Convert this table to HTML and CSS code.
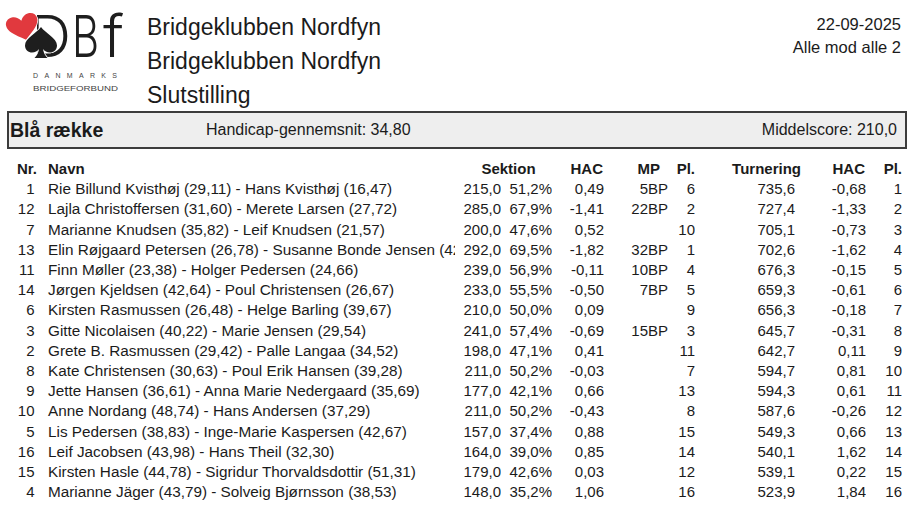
FILE: index.html
```html
<!DOCTYPE html>
<html lang="da">
<head>
<meta charset="utf-8">
<title>Slutstilling - Bridgeklubben Nordfyn</title>
<link rel="stylesheet" href="styles.css">
</head>
<body>
<div class="page">
  <header class="top">
    <svg class="logo" viewBox="0 0 135 100" width="135" height="100" aria-label="Danmarks Bridgeforbund">
      <defs>
        <clipPath id="dclip"><rect x="37" y="0" width="40" height="70"/></clipPath>
      </defs>
      <text class="lg" x="29" y="57" font-size="58" textLength="42" lengthAdjust="spacingAndGlyphs" clip-path="url(#dclip)">D</text>
      <text class="lg" transform="translate(72,57) scale(0.72,1)" font-size="58">B</text>
      <text class="lg" transform="translate(103,57) scale(1.05,1)" font-size="58">f</text>
      <g transform="translate(7,15) rotate(-14 16 12.5)">
        <path class="heart" d="M16,25 C5.5,17.5 0,12.5 0,7 C0,2.8 3.2,0 7.5,0 C11.2,0 14,2.2 16,5.5 C18,2.2 20.8,0 24.5,0 C28.8,0 32,2.8 32,7 C32,12.5 26.5,17.5 16,25 Z"/>
      </g>
      <g transform="translate(25,27)">
        <path class="spade" d="M16,0 C20,6 32,11 32,18.5 C32,23 28.5,25.5 25,25.5 C22,25.5 19.5,24 18,22 C18.5,25.5 20,28.5 22.5,31 L9.5,31 C12,28.5 13.5,25.5 14,22 C12.5,24 10,25.5 7,25.5 C3.5,25.5 0,23 0,18.5 C0,11 12,6 16,0 Z"/>
      </g>
      <text class="sub" x="33" y="77.5" font-size="7" textLength="84" lengthAdjust="spacing">DANMARKS</text>
      <text class="sub" x="33" y="90.5" font-size="8" textLength="85" lengthAdjust="spacingAndGlyphs">BRIDGEFORBUND</text>
    </svg>
    <div class="titles">
      <div>Bridgeklubben Nordfyn</div>
      <div>Bridgeklubben Nordfyn</div>
      <div>Slutstilling</div>
    </div>
    <div class="meta">
      <div>22-09-2025</div>
      <div>Alle mod alle 2</div>
    </div>
  </header>

  <section class="bar">
    <span class="group">Blå række</span>
    <span class="hc">Handicap-gennemsnit: 34,80</span>
    <span class="ms">Middelscore: 210,0</span>
  </section>

  <table class="results">
    <colgroup>
      <col class="c-nr"><col class="c-name"><col class="c-score"><col class="c-pct"><col class="c-hac"><col class="c-mp"><col class="c-pl"><col class="c-tur"><col class="c-hac2"><col class="c-pl2">
    </colgroup>
    <thead>
      <tr>
        <th class="h-nr">Nr.</th>
        <th class="h-name">Navn</th>
        <th class="h-sek" colspan="2">Sektion</th>
        <th class="h-hac">HAC</th>
        <th class="h-mp">MP</th>
        <th class="h-pl">Pl.</th>
        <th class="h-tur">Turnering</th>
        <th class="h-hac2">HAC</th>
        <th class="h-pl2">Pl.</th>
      </tr>
    </thead>
    <tbody>
      <tr><td class="nr">1</td><td class="name">Rie Billund Kvisthøj (29,11) - Hans Kvisthøj (16,47)</td><td>215,0</td><td>51,2%</td><td>0,49</td><td>5BP</td><td>6</td><td class="tur">735,6</td><td>-0,68</td><td>1</td></tr>
      <tr><td class="nr">12</td><td class="name">Lajla Christoffersen (31,60) - Merete Larsen (27,72)</td><td>285,0</td><td>67,9%</td><td>-1,41</td><td>22BP</td><td>2</td><td class="tur">727,4</td><td>-1,33</td><td>2</td></tr>
      <tr><td class="nr">7</td><td class="name">Marianne Knudsen (35,82) - Leif Knudsen (21,57)</td><td>200,0</td><td>47,6%</td><td>0,52</td><td></td><td>10</td><td class="tur">705,1</td><td>-0,73</td><td>3</td></tr>
      <tr><td class="nr">13</td><td class="name">Elin Røjgaard Petersen (26,78) - Susanne Bonde Jensen (42</td><td>292,0</td><td>69,5%</td><td>-1,82</td><td>32BP</td><td>1</td><td class="tur">702,6</td><td>-1,62</td><td>4</td></tr>
      <tr><td class="nr">11</td><td class="name">Finn Møller (23,38) - Holger Pedersen (24,66)</td><td>239,0</td><td>56,9%</td><td>-0,11</td><td>10BP</td><td>4</td><td class="tur">676,3</td><td>-0,15</td><td>5</td></tr>
      <tr><td class="nr">14</td><td class="name">Jørgen Kjeldsen (42,64) - Poul Christensen (26,67)</td><td>233,0</td><td>55,5%</td><td>-0,50</td><td>7BP</td><td>5</td><td class="tur">659,3</td><td>-0,61</td><td>6</td></tr>
      <tr><td class="nr">6</td><td class="name">Kirsten Rasmussen (26,48) - Helge Barling (39,67)</td><td>210,0</td><td>50,0%</td><td>0,09</td><td></td><td>9</td><td class="tur">656,3</td><td>-0,18</td><td>7</td></tr>
      <tr><td class="nr">3</td><td class="name">Gitte Nicolaisen (40,22) - Marie Jensen (29,54)</td><td>241,0</td><td>57,4%</td><td>-0,69</td><td>15BP</td><td>3</td><td class="tur">645,7</td><td>-0,31</td><td>8</td></tr>
      <tr><td class="nr">2</td><td class="name">Grete B. Rasmussen (29,42) - Palle Langaa (34,52)</td><td>198,0</td><td>47,1%</td><td>0,41</td><td></td><td>11</td><td class="tur">642,7</td><td>0,11</td><td>9</td></tr>
      <tr><td class="nr">8</td><td class="name">Kate Christensen (30,63) - Poul Erik Hansen (39,28)</td><td>211,0</td><td>50,2%</td><td>-0,03</td><td></td><td>7</td><td class="tur">594,7</td><td>0,81</td><td>10</td></tr>
      <tr><td class="nr">9</td><td class="name">Jette Hansen (36,61) - Anna Marie Nedergaard (35,69)</td><td>177,0</td><td>42,1%</td><td>0,66</td><td></td><td>13</td><td class="tur">594,3</td><td>0,61</td><td>11</td></tr>
      <tr><td class="nr">10</td><td class="name">Anne Nordang (48,74) - Hans Andersen (37,29)</td><td>211,0</td><td>50,2%</td><td>-0,43</td><td></td><td>8</td><td class="tur">587,6</td><td>-0,26</td><td>12</td></tr>
      <tr><td class="nr">5</td><td class="name">Lis Pedersen (38,83) - Inge-Marie Kaspersen (42,67)</td><td>157,0</td><td>37,4%</td><td>0,88</td><td></td><td>15</td><td class="tur">549,3</td><td>0,66</td><td>13</td></tr>
      <tr><td class="nr">16</td><td class="name">Leif Jacobsen (43,98) - Hans Theil (32,30)</td><td>164,0</td><td>39,0%</td><td>0,85</td><td></td><td>14</td><td class="tur">540,1</td><td>1,62</td><td>14</td></tr>
      <tr><td class="nr">15</td><td class="name">Kirsten Hasle (44,78) - Sigridur Thorvaldsdottir (51,31)</td><td>179,0</td><td>42,6%</td><td>0,03</td><td></td><td>12</td><td class="tur">539,1</td><td>0,22</td><td>15</td></tr>
      <tr><td class="nr">4</td><td class="name">Marianne Jäger (43,79) - Solveig Bjørnsson (38,53)</td><td>148,0</td><td>35,2%</td><td>1,06</td><td></td><td>16</td><td class="tur">523,9</td><td>1,84</td><td>16</td></tr>
    </tbody>
  </table>
</div>
</body>
</html>
```

FILE: styles.css
```css
html, body {
  margin: 0;
  background: #ffffff;
}

body {
  font-family: "Liberation Sans", Arial, sans-serif;
  color: #1b1b1b;
}

.page {
  width: 924px;
}

/* ---------- top header ---------- */
.top {
  display: flex;
  height: 111px;
}

.logo {
  flex: 0 0 auto;
  display: block;
}

.logo .lg {
  font-family: Inter, "Open Sans", "Liberation Sans", sans-serif;
  font-weight: 300;
  fill: #1e1e1e;
}

.logo .heart {
  fill: #e1393e;
  stroke: #ffffff;
  stroke-width: 1.6;
  paint-order: stroke;
}

.logo .spade {
  fill: #1e1e1e;
  stroke: #ffffff;
  stroke-width: 1.6;
  paint-order: stroke;
}

.logo .sub {
  font-family: "Liberation Sans", Arial, sans-serif;
  fill: #444444;
}

.titles {
  margin-left: 12px;
  padding-top: 10px;
  font-size: 23px;
  line-height: 34px;
}

.meta {
  margin-left: auto;
  padding-top: 12.5px;
  padding-right: 23px;
  text-align: right;
  font-size: 16.5px;
  line-height: 23px;
}

/* ---------- group bar ---------- */
.bar {
  margin-left: 7px;
  width: 900px;
  height: 38px;
  box-sizing: border-box;
  border: 2px solid #3c3c3c;
  background: #eeeeee;
  display: flex;
  align-items: center;
}

.group {
  flex: 0 0 197px;
  padding-left: 1px;
  box-sizing: border-box;
  font-weight: bold;
  font-size: 19.5px;
}

.hc {
  font-size: 16px;
}

.ms {
  margin-left: auto;
  padding-right: 8px;
  font-size: 16px;
}

/* ---------- results table ---------- */
.results {
  margin: 10px 0 0 8px;
  border-collapse: collapse;
  border-spacing: 0;
  table-layout: fixed;
  width: 894px;
  font-size: 15px;
  line-height: 20.2px;
}

.results th,
.results td {
  padding: 0;
  white-space: nowrap;
  text-align: right;
  overflow: hidden;
}

.results th {
  font-weight: bold;
}

.c-nr { width: 30px; }
.c-name { width: 417px; }
.c-score { width: 46px; }
.c-pct { width: 51px; }
.c-hac { width: 52px; }
.c-mp { width: 64px; }
.c-pl { width: 27px; }
.c-tur { width: 106px; }
.c-hac2 { width: 65px; }
.c-pl2 { width: 36px; }

.results .h-nr { padding-right: 1px; }
.results .h-name,
.results .name {
  text-align: left;
  padding-left: 10px;
}
.results .name {
  font-size: 15.3px;
  text-overflow: clip;
}
.results .h-sek {
  text-align: center;
  padding-left: 10px;
}
.results .h-hac { padding-right: 1px; }
.results .h-mp { padding-right: 8px; }
.results .h-hac2 { padding-right: 1px; }

.results .nr { padding-right: 3.5px; }
.results .tur { padding-right: 6px; }
```
